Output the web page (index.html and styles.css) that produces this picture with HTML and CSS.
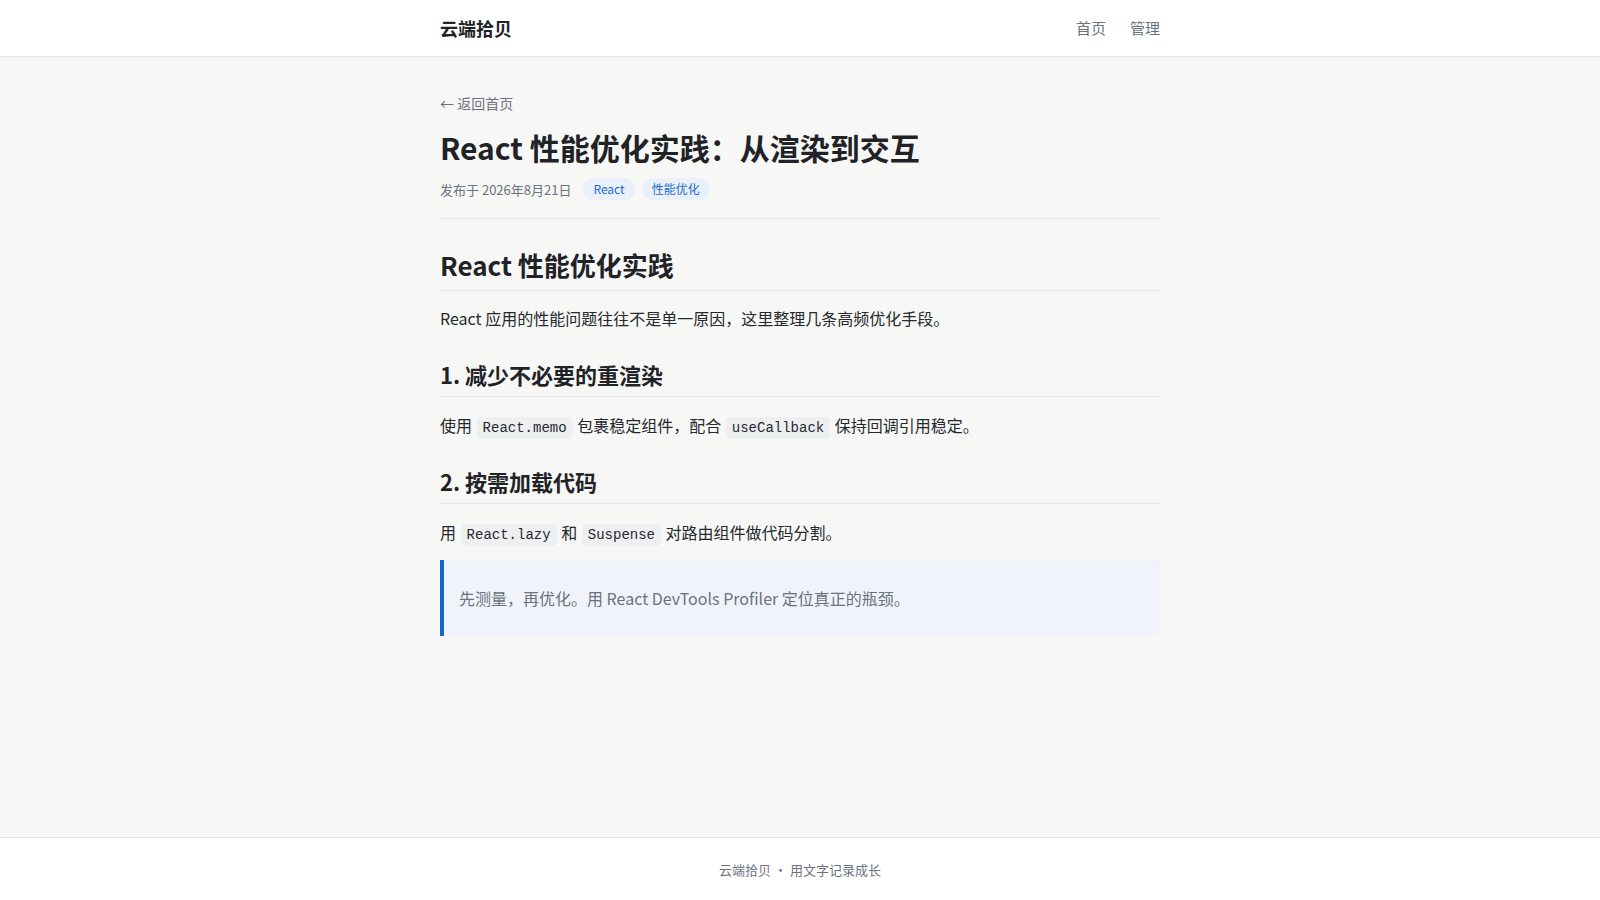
FILE: index.html
```html
<!DOCTYPE html>
<html lang="zh-CN">
<head>
<meta charset="utf-8">
<title>React 性能优化实践：从渲染到交互 - 云端拾贝</title>
<link rel="stylesheet" href="styles.css">
</head>
<body>
<header class="site-header">
  <div class="container header-inner">
    <a class="logo" href="#">云端拾贝</a>
    <nav class="nav">
      <a href="#">首页</a>
      <a href="#">管理</a>
    </nav>
  </div>
</header>
<main class="main">
  <div class="container">
    <a class="back" href="#">← 返回首页</a>
    <div class="post-header">
      <h1 class="post-title">React 性能优化实践：从渲染到交互</h1>
      <div class="meta">
        <span class="date">发布于 2026年8月21日</span>
        <span class="tags">
          <span class="tag">React</span>
          <span class="tag">性能优化</span>
        </span>
      </div>
    </div>
    <article class="content">
      <h2>React 性能优化实践</h2>
      <p>React 应用的性能问题往往不是单一原因，这里整理几条高频优化手段。</p>
      <h3>1. 减少不必要的重渲染</h3>
      <p>使用 <code>React.memo</code> 包裹稳定组件，配合 <code>useCallback</code> 保持回调引用稳定。</p>
      <h3>2. 按需加载代码</h3>
      <p>用 <code>React.lazy</code> 和 <code>Suspense</code> 对路由组件做代码分割。</p>
      <blockquote><p>先测量，再优化。用 React DevTools Profiler 定位真正的瓶颈。</p></blockquote>
    </article>
  </div>
</main>
<footer class="site-footer">
  <span>云端拾贝</span><span class="dot">·</span><span>用文字记录成长</span>
</footer>
</body>
</html>
```
FILE: styles.css
```css
* { box-sizing: border-box; }
html, body { margin: 0; padding: 0; }
body {
  font-family: "Noto Sans CJK SC", "Noto Sans", sans-serif;
  color: #1f2328;
  background: #f7f7f5;
  min-height: 100vh;
  display: flex;
  flex-direction: column;
}
a { text-decoration: none; color: inherit; }
.container {
  width: 720px;
  margin: 0 auto;
}
.site-header {
  background: #ffffff;
  border-bottom: 1px solid #e6e7ea;
}
.header-inner {
  height: 56px;
  display: flex;
  align-items: center;
  justify-content: space-between;
}
.logo {
  font-size: 18px;
  font-weight: 700;
  color: #1f2328;
  line-height: 24px;
  margin-top: -1px;
}
.nav {
  display: flex;
  gap: 24px;
  margin-top: -1px;
}
.nav a {
  font-size: 15px;
  color: #6b7280;
}
.main {
  flex: 1;
  padding: 33px 0 40px;
}
.back {
  display: inline-block;
  font-size: 14px;
  line-height: 20px;
  color: #6b7280;
}
.post-header {
  margin-top: 14px;
  padding-bottom: 18px;
  border-bottom: 1px solid #e6e7ea;
}
.post-title {
  margin: 0;
  font-size: 30px;
  line-height: 39px;
  font-weight: 700;
  color: #1f2328;
}
.meta {
  margin-top: 11px;
  display: flex;
  align-items: center;
  gap: 12px;
  font-size: 13px;
  color: #6b7280;
  height: 22px;
}
.tags {
  display: flex;
  gap: 7px;
}
.tag {
  display: inline-block;
  font-size: 12px;
  line-height: 22px;
  padding: 0 10px;
  border-radius: 11px;
  background: #e9f0fa;
  color: #1a6ccf;
}
.content h2 {
  margin: 29px 0 13px;
  font-size: 26px;
  line-height: 34px;
  font-weight: 700;
  padding-bottom: 8px;
  border-bottom: 1px solid #e6e7ea;
}
.content h3 {
  margin: 28px 0 14px;
  font-size: 22px;
  line-height: 28px;
  font-weight: 700;
  padding-bottom: 8px;
  border-bottom: 1px solid #e6e7ea;
}
.content p {
  margin: 0 0 14px;
  font-size: 16px;
  line-height: 28px;
  color: #24292f;
}
.content code {
  font-family: "Liberation Mono", "DejaVu Sans Mono", monospace;
  font-size: 14px;
  line-height: 1;
  background: #eeeff1;
  padding: 3px 6px;
  margin: 0 1px;
  border-radius: 4px;
}
.content blockquote {
  margin: 0;
  padding: 24px 16px 24px 15px;
  background: #f0f4fa;
  border-left: 4px solid #1667cc;
  border-radius: 0 4px 4px 0;
}
.content blockquote p {
  margin: 0;
  color: #6b7280;
}
.site-footer {
  background: #ffffff;
  border-top: 1px solid #e6e7ea;
  height: 63px;
  display: flex;
  align-items: center;
  justify-content: center;
  font-size: 13px;
  color: #6b7280;
}
.dot {
  margin: 0 3px;
}
```
